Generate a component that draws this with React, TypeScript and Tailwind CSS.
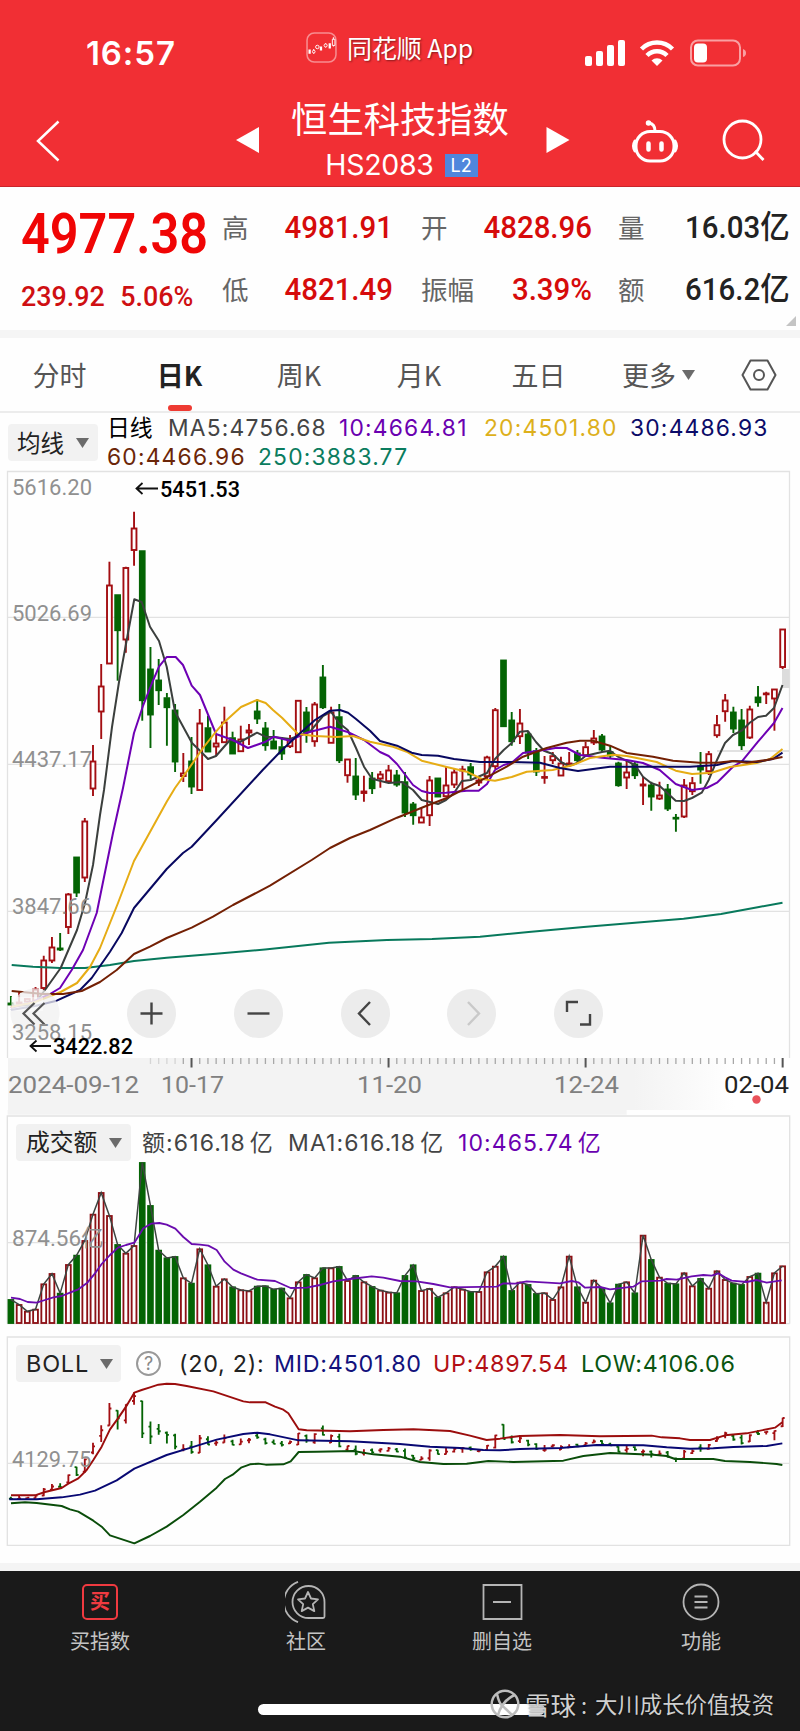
import React from 'react';

type Candle = [number, number, number, number, 0 | 1];

// high, body top, body bottom, low, 1 = rising
const candles: Candle[] = [
  [996, 1003, 1005, 1005, 0], [991, 1002, 1004, 1004, 1], [998, 998.5, 1002, 1002, 1], [987, 989, 1001, 1001, 1],
  [955.7, 960, 988.5, 990.5, 1], [937, 947, 961, 963, 1], [933, 948, 950, 951, 0], [893, 894, 927.5, 934, 1],
  [857, 857, 893, 897, 0], [818, 821, 878, 882, 1], [745, 761, 789, 796, 1], [664, 686, 712, 739, 1],
  [561.7, 585, 664, 664, 1], [594.7, 594.7, 630.7, 680.7, 0], [566.7, 567.5, 640, 652.7, 1], [511.7, 528, 550.5, 565.7, 1],
  [550.7, 550.7, 700.7, 720.7, 0], [647, 669, 715, 748, 0], [659, 680, 690.7, 705, 0], [693, 697.7, 707.7, 745.7, 0],
  [704, 710, 762, 772, 0], [753, 773, 776.5, 782, 1], [737, 761, 787, 794, 0], [709, 723, 790.5, 790.5, 1],
  [715.7, 727.7, 752, 752, 0], [735, 743, 747, 756, 1], [706.7, 722, 742.7, 742.7, 1], [731.7, 737.7, 754, 754, 0],
  [725.7, 739, 751.7, 751.7, 1], [724, 730, 733, 745, 1], [699, 711, 719, 724, 0], [722, 728, 745.7, 750.7, 0],
  [730, 741, 749, 749, 0], [737, 746.7, 754, 760, 0], [735, 740, 746.7, 748, 1], [700.3, 700.3, 752.7, 752.7, 1],
  [707, 712, 732.7, 742.7, 0], [702, 704, 741.7, 746.7, 1], [665, 677, 707.7, 709, 0], [706.7, 712, 743.3, 743.3, 1],
  [704, 716.7, 760.7, 763, 0], [759, 759, 775.7, 782.7, 1], [758, 776, 795, 800, 0], [775.7, 791, 793.5, 801.7, 1],
  [772, 778, 788.7, 794, 0], [771, 774, 779, 787.7, 1], [765, 770, 781.7, 783, 1], [770, 775, 785, 786.7, 0],
  [772, 781.7, 813, 817, 0], [802, 804, 815.7, 824.7, 0], [808, 817, 823, 823, 1], [776, 780, 815.7, 826, 1],
  [778, 778, 797, 797, 0], [766.7, 785, 796.7, 796.7, 1], [769, 772, 785, 788, 1], [765.7, 769, 771, 789, 1],
  [763, 766.7, 775, 779, 0], [776.7, 780, 783, 786, 1], [755.7, 757, 776.7, 780, 1], [708, 709.7, 766.7, 769, 1],
  [660, 660, 726.7, 726.7, 0], [712, 720, 741.7, 745.7, 0], [709, 723, 736.7, 744, 1], [731.7, 734, 753, 759, 0],
  [748, 750.7, 772, 776, 0], [756, 776.5, 778, 783.7, 1], [752, 755.7, 760.7, 764, 1], [756.7, 763, 776, 776, 1],
  [752, 763, 765, 765, 1], [750, 753, 760.7, 763, 0], [741.7, 746.7, 755.7, 757, 1], [730, 738, 743, 745, 1],
  [734, 736, 750, 752, 0], [745.7, 751.7, 756, 758, 0], [761.7, 763, 785.7, 786.7, 0], [760.7, 772, 778, 789, 1],
  [761.7, 764, 775.7, 779, 0], [776.7, 784, 786, 805, 1], [781.7, 785, 797, 810.7, 0], [781.7, 795, 799, 800, 1],
  [784, 789, 809, 811, 0], [814, 817.3, 819, 831.7, 0], [779, 785, 817, 818, 1], [777, 782.7, 791.7, 795, 1],
  [752, 766, 770, 783.7, 0], [751, 753.7, 771.7, 775, 1], [715, 724.7, 735.7, 737.7, 1], [694, 700, 711.7, 721.7, 1],
  [706.7, 712, 729, 733, 0], [709, 720, 745.7, 750, 0], [705.7, 709, 738, 739, 1], [686, 697, 702.7, 706.7, 0],
  [691.7, 693, 694.5, 704, 1], [689, 689, 699, 730.7, 1], [629, 629, 667.5, 669, 1],
];

const volumes = [
  568, 583, 603, 597, 521, 490, 549, 463, 435, 391, 312, 247, 316, 403, 429, 406, 157, 286, 420, 443, 439, 503, 519, 416,
  464, 528, 506, 530, 539, 542, 528, 527, 537, 534, 563, 515, 493, 503, 473, 473, 469, 511, 496, 515, 529, 540, 546, 548,
  496, 464, 541, 535, 561, 548, 530, 537, 544, 544, 485, 468, 438, 541, 516, 523, 550, 548, 568, 530, 438, 530, 576, 510,
  534, 578, 522, 515, 548, 375, 448, 501, 519, 521, 488, 527, 505, 534, 482, 508, 519, 523, 499, 489, 576, 488, 467,
];

const ma = [
  { color: '#08795c', points: '11.7,965 33,966.7 60,968 85,968 110,965 134,961 166.7,957.7 216,953.7 265,949.5 329,942.7 387,940 432,939 480,936.7 528.6,932 583.7,927 635,922.7 683.6,918.7 721,914 759,907 782.5,902.7' },
  { color: '#3b3f3d', points: '11,1006 33,1005 45,990 60.7,968 77,930 85,903 93,865 100,815 104,790 112,727 119,682 128,633 134.3,599.3 141.7,602 150,626.7 159,641 166.7,666.7 175,711.7 192,743 200,750.7 208,759 216,756 230,740 240,742 257,732.7 265.4,736.7 274,737 290,739 298,736 310,731.7 323,716 331,711.7 339,723 347.7,730 356,748 364,766.7 372,778.7 388.7,783 401.7,782 413,790 421.7,800 438,804 446,800 454,793 462,781 470.7,780 487,773 495,759 503.7,750 511.7,743 520,731.7 528,731 536,742 544,750.7 552.7,754 561,762 569,766 577,763 585.7,755.7 602,752 610,750.7 618,756.7 635,765 643,776.7 651,783 659.7,786 675.7,800.7 684,801 692,798 701.7,792.7 708.7,780 717,760 725,743 733,735 741.7,730.7 749.7,722.7 758,717 766,715.7 774,708 782.5,685' },
  { color: '#6e00b4', points: '11,1008 35,1001 50,994 60,988 71.7,970 83,950 96.7,913 113,833 123,788 134,733 142.7,706.7 152,683 159,666.7 166.7,657 175.7,657 183,665 191.7,685.7 200,695 216,734 232.7,740 248,748 265.7,741.7 274,736.7 290,740.7 306.7,732.7 330,726.7 347.7,732 364,740 380,752 388.7,756 397,764 413,785 421.7,791 429.7,793 446,792.7 466.7,790.7 478.7,790.7 487,784 495,770 503.7,765 511.7,762.7 523,753 544,750 556.7,747.7 566.7,748 580,755 602,757.7 626.7,760 643,763 659.7,770 675.7,784 692,790 706.7,788 717,782.7 733,766.7 741.7,761.7 758,741.7 774,723 782.5,708' },
  { color: '#e6ac14', points: '11,1007 35,1002 60.7,992 77,983 90,967 100,948 118,903 134,861 150,832 166.7,801.7 175,788 186.7,771.7 203,748 216,731.7 224.7,721.7 241,707 257,700 265.7,703 273,710 282,717.7 298,734 315,736 336.7,737 353,736 370,741.7 393,746.7 406.7,751.7 421.7,760.7 446.7,767 466.7,771.7 481.7,779 495,780.7 511.7,777 526.7,771.7 552.7,770 573,765 590,758 613,754.7 626.7,756 656.7,762 675.7,770.7 692,774 711.7,772.7 730,767 756.7,763 770,759 782.5,749' },
  { color: '#080860', points: '11,1010 35,1006 56.7,1000.7 80,990 91.7,978 110,951.7 121.7,933 134,908 166.7,869 183,853 191.7,846.7 216.7,820 262.7,770 282,750 298,735 315,720 330,710.7 340,710 348,712.7 356,719 370,730.7 380,741 397,745.7 411.7,752.7 421.7,755 438,755.7 454,759 480,762 511.7,762 540,762.7 560,768 578,771 593,769 610,766.7 656.7,766.7 690,766.7 717,765 733,761 756.7,762 773,759 782.5,752.7' },
  { color: '#732004', points: '11.7,991 43,994 63,994 81.7,991 100,982 116.7,970 134,954 150,946.7 166.7,938 191.7,927.7 213,916.7 233,905 270,885.7 311.7,860 330,848 350,838 370,830 397,817.7 426.7,805.7 446.7,798 476.7,782.7 506.7,766.7 523,756.7 546.7,748 566.7,742.7 580,740.7 593,740.7 610,745.7 626.7,753 653,756.7 673,760.7 700,762.7 717,762.7 733,761 746.7,762.7 766.7,760 782.5,757' },
];

const volumeMa =
  '33,563 60,567 83,576 110,578 135,570 160,562 185,558 210,548 235,538 262,518 285,490 305,462 330,435 354,413 378,405 403,398 430,355 453,341 478,339 500,344 526,356 550,381 575,402 600,404 625,407 650,420 674,455 700,479 723,490 772,509 825,513 872,534 920,533 960,525 1000,514 1050,507 1115,499 1150,503 1200,513 1250,514 1300,522 1350,532 1490,530 1510,520 1545,521 1580,514 1680,520 1715,513 1735,517 1755,533 1800,531 1830,538 1900,530 1925,514 1980,512 2000,507 2030,509 2075,499 2110,495 2135,497 2155,490 2175,502 2195,512 2240,516 2270,510 2300,518 2345,511';

const boll = [
  { color: '#9b0d0d', points: '33,496 105,496 135,486 185,474 205,461 235,445 260,420 280,390 305,350 330,298 354,265 378,230 403,188 425,180 450,172 475,164 500,161 525,162 560,168 640,184 730,214 750,217 797,217 825,230 848,238 865,250 896,298 920,301 1050,304 1150,300 1240,298 1350,303 1410,317 1460,330 1500,326 1560,318 1680,315 1800,319 1955,317 1985,322 2040,325 2070,330 2130,330 2175,316 2240,310 2325,293 2347,277' },
  { color: '#080873', points: '28,508 110,508 185,502 240,494 285,482 350,451 403,416 500,375 575,352 650,329 730,312 772,308 810,313 896,331 1050,334 1200,342 1290,350 1380,354 1450,360 1500,361 1560,357 1680,354 1790,345 1930,346 2000,352 2070,356 2140,355 2200,351 2300,348 2347,340' },
  { color: '#0a4d0a', points: '33,520 75,517 110,519 185,528 210,538 235,545 280,572 305,590 330,616 403,640 450,618 500,590 550,555 600,515 650,473 675,447 698,434 723,413 750,403 775,401 797,404 850,403 872,394 896,366 950,365 1060,363 1120,373 1200,380 1260,396 1330,402 1400,401 1465,393 1540,396 1690,392 1750,378 1830,369 1960,374 2000,378 2025,387 2140,387 2175,393 2250,396 2330,402 2347,405' },
];

const RED = '#a30e12';
const GREEN = '#046404';
const xAt = (i: number) => 10.9 + i * 8.21;
const bollY = (y: number) => 188 + (y - 511.7) * 0.6469;

const Caret = ({ className = '' }: { className?: string }) => (
  <svg viewBox="0 0 13 10" className={`h-[10px] w-[13px] ${className}`}>
    <path d="M0 0h13L6.5 10z" fill="#6b6b6b" />
  </svg>
);

const Header = () => (
  <header className="h-[187px] border-b border-[#c9252b] bg-[#f12f34] text-white">
    <div className="flex h-[94px] items-center">
      <div className="ml-[86px] mt-[13px] w-[220px] font-['Inter'] text-[33px] leading-none font-semibold tracking-[0.9px]">16:57</div>
      <svg viewBox="0 0 30 30" className="h-[31px] w-[31px]" fill="none">
        <rect x="1" y="1" width="28" height="28" rx="7" stroke="#f78d90" strokeWidth="1.5" />
        <path d="M3.500 17v4M14.500 14v4M23 11v5" stroke="#fff" strokeWidth="2.200" />
        <path d="M7.500 16.500v4.500M19 11v4M26.500 5v9" stroke="#fff" strokeWidth="1" />
        <circle cx="7.500" cy="19" r="1.300" stroke="#fff" strokeWidth="0.9" fill="#f12f34" />
        <circle cx="11" cy="14.500" r="1.700" stroke="#fff" strokeWidth="0.9" fill="#f12f34" />
        <circle cx="19" cy="13" r="1.500" stroke="#fff" strokeWidth="0.9" fill="#f12f34" />
        <path d="M25.500 7h2.500v6h-2.500z" stroke="#fff" strokeWidth="0.9" fill="#f12f34" />
      </svg>
      <div className="ml-[10px] w-[238px] text-[25px] leading-none -tracking-[0.1px] text-shadow-[1px_1px_2px_rgba(0,0,0,0.45)]">同花顺 App</div>
      <svg viewBox="0 0 162 28" className="mt-[12px] h-[28px] w-[162px]" fill="#fff">
        <rect x="0" y="17" width="7" height="10" rx="2" />
        <rect x="11" y="12" width="7" height="15" rx="2" />
        <rect x="22" y="6" width="7" height="21" rx="2" />
        <rect x="33" y="1" width="7" height="26" rx="2" />
        <g fill="none" stroke="#fff" strokeWidth="4.500">
          <path d="M56.500 10a22 22 0 0 1 31 0" />
          <path d="M62 16.500a14 14 0 0 1 20 0" />
        </g>
        <path d="M66.500 21.500a8 8 0 0 1 11 0L72 27z" />
        <rect x="106" y="1.500" width="49" height="25" rx="7" fill="none" stroke="#f9a0a2" strokeWidth="2" />
        <rect x="109" y="4.500" width="13" height="19" rx="4" />
        <path d="M158 10q3 1 3 4t-3 4z" fill="#f9a0a2" />
      </svg>
    </div>
    <div className="flex h-[92px]">
      <svg viewBox="0 0 24 42" className="mt-[26px] ml-[36px] h-[42px] w-[24px]" fill="none" stroke="#fff" strokeWidth="2.500">
        <path d="M22.500 1.500L2 21l20.500 19.500" />
      </svg>
      <svg viewBox="0 0 23 26" className="mt-[33px] ml-[176px] h-[26px] w-[23px]">
        <path d="M23 0v26L0 13z" fill="#fff" />
      </svg>
      <div className="ml-[32px] flex w-[218px] flex-col items-center">
        <h1 className="mt-[4px] h-[38px] text-[36.300px] leading-[38px] whitespace-nowrap">恒生科技指数</h1>
        <div className="mt-[14px] ml-[3px] flex items-center gap-[11px]">
          <span className="font-['Inter'] text-[28.500px] leading-[30px] tracking-[-0.3px]">HS2083</span>
          <span className="h-[23px] w-[33px] bg-[#4f86dc] text-center font-['Inter'] text-[18px] leading-[23px]">L2</span>
        </div>
      </div>
      <svg viewBox="0 0 23 26" className="mt-[33px] ml-[37px] h-[26px] w-[24px]">
        <path d="M0 0v26l23-13z" fill="#fff" />
      </svg>
      <svg viewBox="0 0 48 46" className="mt-[24px] ml-[61px] h-[46px] w-[48px]" fill="none" stroke="#fff" strokeWidth="3" strokeLinecap="round">
        <rect x="5" y="13.500" width="38" height="29.500" rx="14" />
        <path d="M4 23q-3 5 0 10M44 23q3 5 0 10M24 13q0-7-6-8" />
        <circle cx="17.500" cy="5" r="2" fill="#fff" strokeWidth="1.500" />
        <path d="M17.500 25.500v6M30.500 25.500v6" strokeWidth="4.500" />
      </svg>
      <svg viewBox="0 0 44 44" className="mt-[25px] ml-[43px] h-[44px] w-[44px]" fill="none" stroke="#fff" strokeWidth="2.800">
        <circle cx="20.500" cy="20.500" r="18.500" />
        <path d="M33 32l8.500 9" />
      </svg>
    </div>
  </header>
);

const Stat = ({ label, value, dark = false }: { label: string; value: string; dark?: boolean }) => (
  <div className="flex h-[62px] items-center justify-between whitespace-nowrap">
    <span className="text-[26.500px] text-[#666]">{label}</span>
    <span className={`origin-right scale-x-[0.92] font-['Roboto','Noto_Sans_CJK_SC',sans-serif] text-[32px] font-medium ${dark ? 'text-[#222]' : 'text-[#d60b0b]'}`}>
      {value}
    </span>
  </div>
);

const Quote = () => (
  <section className="relative flex h-[143px] pt-[9px]">
    <div className="ml-[21px] w-[201px] font-['Roboto']">
      <div className="mt-[10px] h-[56px] origin-left scale-x-[0.9] text-[56px] leading-[56px] font-semibold whitespace-nowrap text-[#f00505]">4977.38</div>
      <div className="mt-[19px] flex origin-left scale-x-[0.96] gap-[16px] text-[28px] leading-[32px] font-medium text-[#cf0f12]">
        <span>239.92</span>
        <span>5.06%</span>
      </div>
    </div>
    <div className="w-[171px]">
      <Stat label="高" value="4981.91" />
      <Stat label="低" value="4821.49" />
    </div>
    <div className="ml-[28px] w-[171px]">
      <Stat label="开" value="4828.96" />
      <Stat label="振幅" value="3.39%" />
    </div>
    <div className="ml-[26px] w-[172px]">
      <Stat label="量" value="16.03亿" dark />
      <Stat label="额" value="616.2亿" dark />
    </div>
    <svg viewBox="0 0 10 10" className="absolute right-[4px] bottom-[4px] h-[10px] w-[10px]">
      <path d="M10 0v10H0z" fill="#c4c4c4" />
    </svg>
  </section>
);

const Tabs = () => (
  <nav className="grid h-[75px] grid-cols-[119px_121px_118px_122px_117px_123px_80px] items-center border-b-2 border-[#ececec] pt-[1px] text-center text-[27px] text-[#555]">
    <span>分时</span>
    <span className="relative flex h-full items-center justify-center font-bold text-[#222]">
      日K
      <i className="absolute bottom-0 h-[6px] w-[24px] rounded-[3px] bg-[#ee3b33]" />
    </span>
    <span>周K</span>
    <span>月K</span>
    <span>五日</span>
    <span className="flex items-center justify-center gap-[6px]">
      更多
      <Caret />
    </span>
    <svg viewBox="0 0 36 32" className="ml-[21px] h-[32px] w-[36px]" fill="none" stroke="#555" strokeWidth="2">
      <path d="M9.500 1.500h17L34.500 16l-8 14.500h-17L1.500 16z" strokeLinejoin="round" />
      <circle cx="18" cy="16" r="5" />
    </svg>
  </nav>
);

const Legend = () => (
  <section className="flex h-[57px]">
    <button className="mt-[11px] ml-[8px] flex h-[37px] w-[90px] items-center rounded-[4px] bg-[#f2f2f2] pl-[9px] text-[23.500px] text-[#222]">
      均线
      <Caret className="ml-[12px]" />
    </button>
    <div className="ml-[9px] font-['Inter','Noto_Sans_CJK_SC',sans-serif] text-[22.800px] leading-[29px] tracking-[1.200px] whitespace-nowrap">
      <div className="flex">
        <span className="w-[61px] tracking-normal text-black">日线</span>
        <span className="w-[171px] text-[#444]">MA5:4756.68</span>
        <span className="w-[145px] text-[#6a00b0]">10:4664.81</span>
        <span className="w-[146px] text-[#ddb01c]">20:4501.80</span>
        <span className="text-[#0b0b68]">30:4486.93</span>
      </div>
      <div className="flex">
        <span className="w-[151px] text-[#6b2608]">60:4466.96</span>
        <span className="text-[#0a7c5e]">250:3883.77</span>
      </div>
    </div>
  </section>
);

const CandleMark = ({ c, i }: { c: Candle; i: number }) => {
  const [high, top, bottom, low, up] = c;
  const x = xAt(i);
  const color = up ? RED : GREEN;
  return (
    <g stroke={color} strokeWidth="1.900">
      <path d={`M${x} ${high}V${top}M${x} ${bottom}V${low}`} />
      <rect x={x - 2.4} y={top + 0.5} width="4.800" height={Math.max(bottom - top - 1, 0.8)} fill={up ? '#fff' : color} />
    </g>
  );
};

const Label = ({ x, y, w, size = 22.5, fill = '#909090', weight = 400, children }: { x: number; y: number; w: number; size?: number; fill?: string; weight?: number; children: string }) => (
  <text x={x} y={y} textLength={w} lengthAdjust="spacingAndGlyphs" fontSize={size} fill={fill} fontWeight={weight} className="font-['Roboto','Noto_Sans_CJK_SC',sans-serif]">
    {children}
  </text>
);

const KLine = () => (
  <section className="relative h-[640px]">
    <svg viewBox="0 470 800 640" className="block h-[640px] w-[800px]" fill="none">
      <defs>
        <linearGradient id="axis">
          <stop offset="0.8" stopColor="#f3f3f3" />
          <stop offset="0.93" stopColor="#fff" />
        </linearGradient>
      </defs>
      <rect x="8" y="1058" width="782" height="52" fill="url(#axis)" />
      <path d="M7.500 1058V471.500H789.500V1058M8 617.300H789M8 764.300H789M8 911.300H789" stroke="#e2e2e2" strokeWidth="1.300" />
      <path d="M717 751H789" stroke="#c4c4c4" />
      <rect x="782" y="669" width="7.500" height="19" fill="#dcdcdc" />
      <Label x={12} y={495} w={80}>5616.20</Label>
      <Label x={12} y={621} w={80}>5026.69</Label>
      <Label x={12} y={767} w={80}>4437.17</Label>
      {candles.map((c, i) => (
        <CandleMark key={i} c={c} i={i} />
      ))}
      {ma.map((line) => (
        <polyline key={line.color} points={line.points} stroke={line.color} strokeWidth="2" strokeLinejoin="round" />
      ))}
      <circle cx="35" cy="1013" r="24.500" fill="#f0f0f0" fillOpacity="0.75" />
      <path d="M11 997h32v14H11z" fill="#fff" fillOpacity="0.45" />
      <path d="M34.500 1003l-11 10.500 11 11M44.500 1003l-11 10.500 11 11" stroke="#555" strokeWidth="2.200" />
      <Label x={12} y={914} w={80}>3847.66</Label>
      <Label x={12} y={1040} w={80}>3258.15</Label>
      <Label x={160} y={497} w={80} fill="#000" weight={500}>5451.53</Label>
      <Label x={53} y={1054} w={80} fill="#000" weight={500}>3422.82</Label>
      <path d="M158 488.500H136M142.500 483l-6 5.500 6 5.500M51 1046H30M36.500 1040.500l-6 5.500 6 5.500" stroke="#111" strokeWidth="1.800" />
      {candles.map((_, i) => {
        if (i < 17) return null;
        const major = (i - 22) % 24 === 0;
        return (
          <path key={i} d={`M${xAt(i)} 1058V${major ? 1067.5 : 1064}`} stroke={major ? '#555' : '#a8a8a8'} strokeWidth={major ? 2 : 1.3} opacity={i < 21 ? 0.4 : 1} />
        );
      })}
      <Label x={8} y={1093} w={131} size={24} fill="#808080">2024-09-12</Label>
      <Label x={161} y={1093} w={63} size={24} fill="#808080">10-17</Label>
      <Label x={357} y={1093} w={65} size={24} fill="#808080">11-20</Label>
      <Label x={554} y={1093} w={65} size={24} fill="#808080">12-24</Label>
      <Label x={724} y={1093} w={65} size={24} fill="#222">02-04</Label>
      <circle cx="756.500" cy="1099.500" r="4.200" fill="#e9525c" />
    </svg>
    <div className="absolute top-[518.500px] left-[127px] flex gap-[57.800px]">
      {['M13.500 24.500h22M24.500 13.500v22', 'M13.500 24.500h22', 'M29 13L18 24.500 29 36', 'M21 13l11 11.500L21 36', 'M13 23V13h11M26 35.500h10V25'].map((d, i) => (
        <svg key={d} viewBox="0 0 49 49" className="h-[49px] w-[49px]" fill="none">
          <circle cx="24.500" cy="24.500" r="24.500" fill="#ececec" />
          <path d={d} stroke={i === 3 ? '#c9c9c9' : '#444'} strokeWidth="2.400" />
        </svg>
      ))}
    </div>
  </section>
);

const Volume = () => (
  <section className="relative h-[220px]">
    <svg viewBox="0 0 2400 660" className="block h-[220px] w-[800px]" fill="none">
      <path d="M23 0H1880V14H23z" fill="#f3f3f3" />
      <path d="M22 641V18H2369V641M22 398H2369M22 641H2369" stroke="#e2e2e2" strokeWidth="4" />
      {volumes.map((v, i) => {
        const up = candles[i][4];
        return (
          <rect key={i} x={xAt(i) * 3 - 7.2} y={v + 2} width="14.400" height={637 - v} fill={up ? '#fff' : GREEN} stroke={up ? '#8c1015' : GREEN} strokeWidth="5.500" />
        );
      })}
      <polyline points={volumes.map((v, i) => `${xAt(i) * 3},${v + 1}`).join(' ')} stroke="#3d4440" strokeWidth="4.500" />
      <polyline points={volumeMa} stroke="#6a0cae" strokeWidth="5.500" strokeLinejoin="round" />
      <Label x={36} y={407} w={275} size={67}>874.56亿</Label>
    </svg>
    <div className="absolute top-[14px] left-[16px] flex h-[37px] items-center pt-[2px] font-['Inter','Noto_Sans_CJK_SC',sans-serif] text-[23px] tracking-[1.100px] whitespace-nowrap text-[#444]">
      <button className="-mt-[2px] flex h-[37px] w-[115px] items-center rounded-[4px] bg-[#f1f1f1] pl-[10px] text-[23.800px] tracking-normal text-[#222]">
        成交额
        <Caret className="ml-[12px]" />
      </button>
      <span className="ml-[11px] w-[146px]">额:616.18<span className="ml-[4px]">亿</span></span>
      <span className="w-[170px]">MA1:616.18<span className="ml-[4px]">亿</span></span>
      <span className="text-[#6a00b0]">10:465.74<span className="ml-[4px]">亿</span></span>
    </div>
  </section>
);

const Boll = () => (
  <section className="relative h-[233px]">
    <svg viewBox="0 0 2400 699" className="block h-[233px] w-[800px]" fill="none">
      <path d="M22 21H2369V646H22zM22 400H2369" stroke="#e2e2e2" strokeWidth="4" />
      {candles.map(([high, top, bottom, low, up], i) => {
        const x = xAt(i) * 3;
        const open = bollY(up ? bottom : top);
        const close = bollY(up ? top : bottom);
        return (
          <path key={i} d={`M${x} ${bollY(high) - 1}V${bollY(low) + 1}M${x - 6} ${open}H${x}M${x} ${close}H${x + 6}`} stroke={up ? RED : GREEN} strokeWidth="5.500" />
        );
      })}
      {boll.map((line) => (
        <polyline key={line.color} points={line.points} stroke={line.color} strokeWidth="5.800" strokeLinejoin="round" />
      ))}
      <Label x={36} y={411} w={238} size={67}>4129.75</Label>
    </svg>
    <div className="absolute top-[15px] left-[16px] flex h-[37px] items-center pt-[2px] font-['Inter'] text-[23.300px] tracking-[0.750px] whitespace-nowrap">
      <button className="-mt-[2px] flex h-[37px] w-[105px] items-center rounded-[4px] bg-[#f1f1f1] pl-[10px] text-[23.500px] text-[#222]">
        BOLL
        <Caret className="ml-[11px]" />
      </button>
      <span className="-mt-[2px] ml-[15px] h-[25px] w-[25px] rounded-full border-2 border-[#999] text-center text-[18px] leading-[21px] tracking-normal text-[#888]">?</span>
      <span className="ml-[18px] w-[95px] text-[#222]">(20, 2):</span>
      <span className="w-[159px] text-[#12127c]">MID:4501.80</span>
      <span className="w-[148px] text-[#b20f14]">UP:4897.54</span>
      <span className="text-[#0a5510]">LOW:4106.06</span>
    </div>
  </section>
);

const NavItem = ({ label, children }: { label: string; children: React.ReactNode }) => (
  <div className="flex w-[62px] flex-col items-center">
    <svg viewBox="0 0 42 42" className="h-[42px] w-[42px]" fill="none" stroke="#b5b5b5" strokeWidth="1.800">
      {children}
    </svg>
    <span className="mt-[4px] text-[20px] leading-[28px] whitespace-nowrap text-[#c4c4c4]">{label}</span>
  </div>
);

const BottomNav = () => (
  <footer className="relative h-[160px] border-t-8 border-[#f4f4f4] bg-[#1a1a1a] box-content">
    <div className="flex pt-[10px] pl-[69px]">
      <NavItem label="买指数">
        <rect x="4" y="4" width="34" height="34" rx="4" stroke="#f03a40" strokeWidth="2" />
        <text x="21" y="28" textAnchor="middle" fontSize="20" fontWeight="700" fill="#f03a40" stroke="none">买</text>
      </NavItem>
      <div className="w-[144px]" />
      <NavItem label="社区">
        <path d="M37 37H22.500A16 16 0 1 1 38.500 21v14.500q0 1.500-1.500 1.500z" transform="translate(1 0)" />
        <path d="M13 .8a21.500 21.500 0 0 0 0 40.400" />
        <path d="M23 11l3 6.500 7 .8-5.200 4.800 1.500 7-6.300-3.500-6.300 3.500 1.500-7-5.200-4.800 7-.8z" strokeLinejoin="round" />
      </NavItem>
      <div className="w-[134px]" />
      <NavItem label="删自选">
        <path d="M2.500 4h38v34h-38zM12 21h18" />
      </NavItem>
      <div className="w-[137px]" />
      <NavItem label="功能">
        <circle cx="21" cy="21" r="17.500" />
        <path d="M14.500 15.500h13M14.500 21h13M14.500 26.500h13" />
      </NavItem>
    </div>
    <div className="absolute top-[133px] left-[258px] h-[11px] w-[287px] rounded-full bg-white" />
    <div className="absolute top-[117px] left-[490px] flex h-[32px] items-center whitespace-nowrap text-[#cfcfcf] text-shadow-[0_0_2px_rgba(0,0,0,0.7)]">
      <svg viewBox="0 0 30 30" className="h-[30px] w-[30px]" fill="none" stroke="#bdbdbd" strokeWidth="2.500">
        <circle cx="15" cy="15" r="13.300" />
        <path d="M7 5q2 9 5 11.500T22 26M24.500 6Q12 12 8 26" />
      </svg>
      <span className="ml-[5px] text-[25.500px]">雪球</span>
      <span className="ml-[5px] w-[14px] text-[22px]">:</span>
      <span className="text-[22.400px]">大川成长价值投资</span>
    </div>
  </footer>
);

const App: React.FC = () => {
  return (
    <div className="h-[1731px] w-[800px] overflow-hidden bg-[#fefefe] font-['Noto_Sans_CJK_SC',sans-serif]">
      <Header />
      <Quote />
      <div className="h-[8px] bg-[#f5f5f5]" />
      <Tabs />
      <Legend />
      <KLine />
      <Volume />
      <Boll />
      <BottomNav />
    </div>
  );
};

export default App;
